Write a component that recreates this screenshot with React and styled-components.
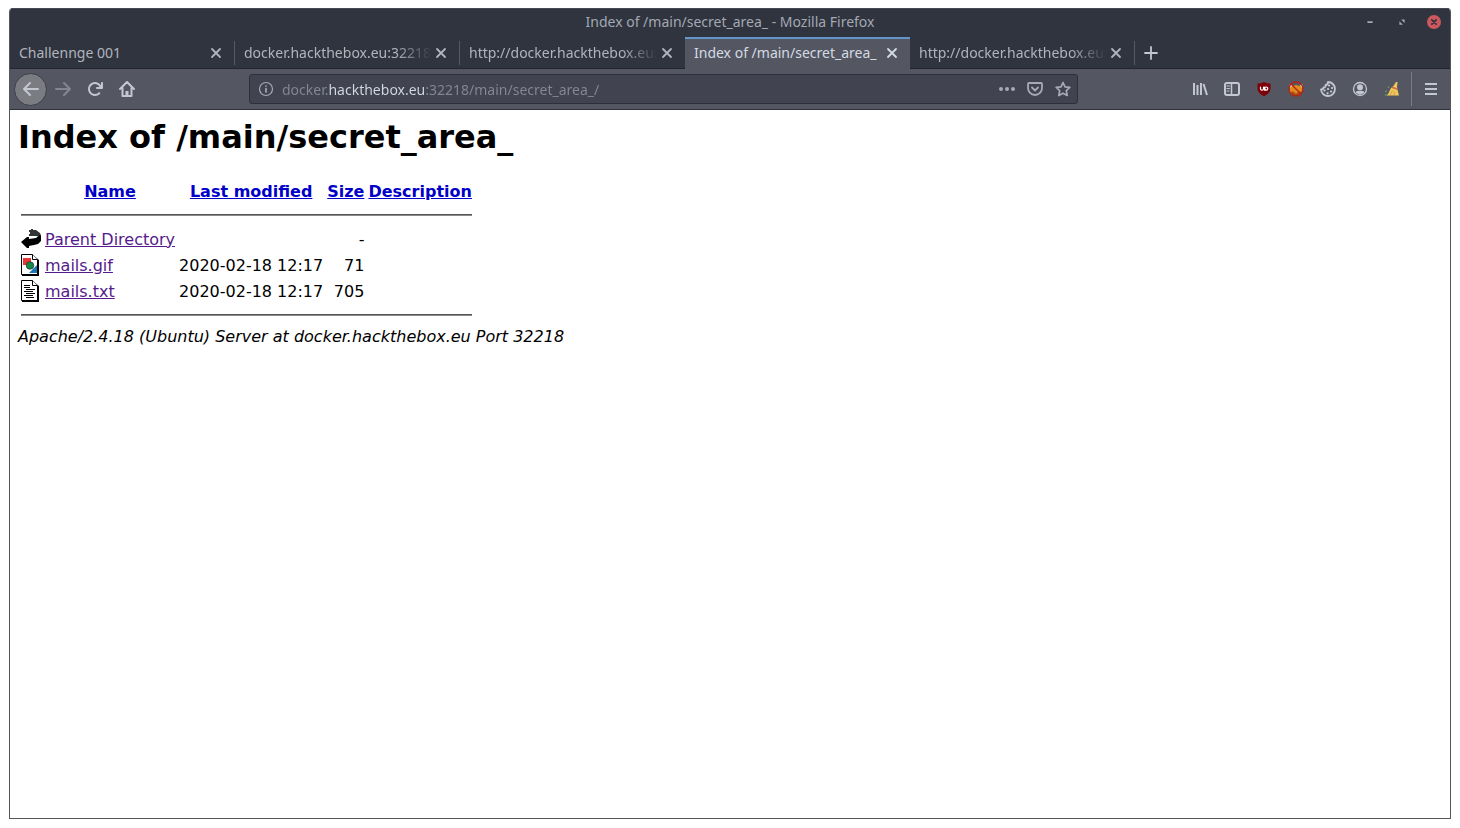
import React from "react";
import styled, { createGlobalStyle } from "styled-components";

const GlobalStyle = createGlobalStyle`
  * {
    box-sizing: border-box;
  }
  body {
    margin: 0;
    background: #ffffff;
  }
`;

const Window = styled.div`
  display: flex;
  flex-direction: column;
  min-height: calc(100vh - 17px);
  margin: 8px 9px 9px;
  border: 1px solid #55555a;
  border-top: 0;
  border-radius: 4px 4px 0 0;
  overflow: hidden;
  font-family: "Noto Sans", sans-serif;
  font-size: 14px;
  color: #b3b7c0;
`;
const TitleBar = styled.header`
  display: grid;
  grid-template-columns: 1fr auto 1fr;
  align-items: center;
  height: 29px;
  padding: 0 9px 2px;
  background: #2f343f;
  box-shadow: inset 0 1px #444955;
`;
const Title = styled.span`
  grid-column: 2;
  color: #a4a8b2;
`;
const WindowButtons = styled.div`
  display: flex;
  gap: 18px;
  justify-content: flex-end;
`;
const PlainButton = styled.button`
  display: flex;
  flex: none;
  align-items: center;
  justify-content: center;
  width: ${({ $size }) => $size || 32}px;
  height: ${({ $size }) => $size || 32}px;
  padding: 0;
  border: 0;
  background: none;
  color: ${({ $color }) => $color || "#c3c7d1"};
`;
const Tabs = styled.nav`
  display: flex;
  height: 32px;
  background: #2f343f;
  box-shadow: inset 0 -1px #22252e;
`;
const Tab = styled.div`
  display: flex;
  flex: 0 1 ${({ $divided }) => ($divided ? 224 : 225)}px;
  align-items: center;
  min-width: 0;
  padding: 0 9px 3px;
  border-top: 2px solid ${({ $active }) => ($active ? "#6295cc" : "transparent")};
  background: ${({ $active }) => ($active ? "#545762" : "none")};
  color: ${({ $active }) => ($active ? "#d3dae3" : "#b0b4bd")};
`;
const TabLabel = styled.span`
  flex: 1;
  min-width: 0;
  overflow: hidden;
  white-space: nowrap;
  mask-image: ${({ $fade }) =>
    $fade ? "linear-gradient(to left, transparent, #000 36px)" : "none"};
`;
const Divider = styled.span`
  flex: none;
  width: 1px;
  height: ${({ $h }) => $h}px;
  margin: 0 ${({ $gap }) => $gap || 0}px;
  align-self: center;
  background: ${({ $color }) => $color || "#555a65"};
`;
const Toolbar = styled.div`
  display: flex;
  align-items: center;
  height: 41px;
  padding: 0 3px 0 4px;
  border-bottom: 1px solid #2e313b;
  background: #545762;
`;
const BackButton = styled(PlainButton)`
  border: 1px solid #3c3e48;
  border-radius: 50%;
  background: #7b7c81;
`;
const UrlBar = styled.div`
  display: flex;
  flex: 1;
  align-items: center;
  min-width: 0;
  height: 30px;
  margin: 0 106px;
  padding-left: 8px;
  gap: 8px;
  border: 1px solid #2d303b;
  border-radius: 3px;
  background: #414350;
  color: #a7aab5;
`;
/* the host part of the address is brighter than the rest */
const UrlInput = styled.input`
  flex: 1;
  min-width: 0;
  height: 28px;
  padding: 0;
  border: 0;
  outline: 0;
  font: inherit;
  color: transparent;
  background: linear-gradient(
    to right,
    #858894 47px,
    #d3dae3 47px 143px,
    #858894 143px
  );
  background-clip: text;
`;
const UrlActions = styled.div`
  display: flex;
`;
const Page = styled.main`
  flex: 1;
  padding: 8px;
  background: #ffffff;
  color: #000000;
  font-family: "DejaVu Sans", sans-serif;
  font-size: 16px;
  line-height: 19px;
`;
const Heading = styled.h1`
  margin: 0 0 20px;
  font-size: 32px;
  line-height: 39px;
`;
const Listing = styled.table`
  border-spacing: 2px;
  td,
  th {
    padding: 1px;
  }
  td:nth-child(3),
  td:nth-child(4) {
    text-align: right;
    white-space: nowrap;
  }
`;
const Link = styled.a`
  color: ${({ $visited }) => ($visited ? "#551a8b" : "#0000c8")};
`;
const FileIcon = styled.svg`
  display: block;
  width: 20px;
  height: 22px;
`;
const Rule = styled.hr`
  height: 2px;
  margin: 8px 0;
  border: 0;
  border-top: 1px solid #555555;
  border-bottom: 1px solid #8a8a8a;
`;
const Address = styled.address`
  font-style: italic;
`;

const Icon = ({ size = 16, children }) => (
  <svg
    width={size}
    height={size}
    viewBox="0 0 16 16"
    fill="none"
    stroke="currentColor"
    strokeWidth="2"
    strokeLinecap="round"
    strokeLinejoin="round"
    aria-hidden="true"
  >
    {children}
  </svg>
);

const tools = [
  {
    label: "Library",
    icon: (
      <path d="M2 2v12M5.5 4v10M9 2v12M11.5 3l3.5 11" strokeLinecap="butt" />
    ),
  },
  {
    label: "Sidebars",
    icon: (
      <>
        <rect x="1" y="2" width="14" height="12" rx="2" />
        <path d="M7.5 2v12" strokeWidth="1.5" />
        <path d="M3 5h2.5M3 7.5h2.5M3 10h2" strokeWidth="1" />
      </>
    ),
  },
  {
    label: "uBlock Origin",
    icon: (
      <>
        <path
          d="M8 1c2.5 1.5 4.5 1.5 6.500 1.500V7c0 4-3 6.500-6.500 8.300C4.500 13.500 1.500 11 1.500 7V2.500C3.500 2.500 5.500 2.500 8 1z"
          fill="#7d0008"
          stroke="none"
        />
        <path d="M4.500 6v1.700a1.500 1.500 0 0 0 3 0V6M8.700 6v3.200" stroke="#fff" strokeWidth="1.200" />
        <circle cx="10.200" cy="7.600" r="1.600" stroke="#fff" strokeWidth="1.200" />
      </>
    ),
  },
  {
    label: "FoxyProxy",
    icon: (
      <>
        <path d="M2 4l3 1 3-1 4 1 2-2 .5 6-3 5H5L2 11z" fill="#e08a20" stroke="none" />
        <path d="M1.500 3.500l3 .500-2 3zM14.500 3l-2.500 1 2 3z" fill="#f3d9b0" stroke="none" />
        <path d="M3 11c2-1 3 0 5 2 2-2 3-3 5-2l-2 3H5z" fill="#a8480f" stroke="none" />
        <circle cx="8" cy="8" r="7" stroke="#b52218" strokeWidth="1.300" />
        <path d="M3 3l10 10" stroke="#b52218" strokeWidth="1.300" />
      </>
    ),
  },
  {
    label: "Cookies",
    icon: (
      <>
        <path
          d="M8 1a7 7 0 1 1-7 7.500c1.500 0 2.500-.500 2.500-2C5 6.500 6 5.500 5.500 4 7 4 8 2.500 8 1z"
          strokeWidth="1.800"
        />
        <path d="M9 4.500h.1M12 7h.1M8 8h.1M4.500 9.500h.1M11 10.500h.1M7.500 12.300h.1" strokeWidth="2.200" />
      </>
    ),
  },
  {
    label: "Account",
    icon: (
      <>
        <circle cx="8" cy="8" r="6.500" strokeWidth="1.300" />
        <circle cx="8" cy="6.300" r="3" fill="currentColor" stroke="none" />
        <path
          d="M3.500 11.300c1-1.500 2.500-1.500 4.500-1.500s3.500 0 4.500 1.500c-2.500 2.800-6.500 2.800-9 0z"
          fill="currentColor"
          stroke="none"
        />
      </>
    ),
  },
  {
    label: "Clear data",
    icon: (
      <>
        <path d="M13.500 1l-.500 6 2 7.500H2.500C6 12 5 8 9 5.500L12 1z" fill="#eec65c" stroke="none" />
        <path d="M8.500 6.500l4.500 1.500" stroke="#d0684a" strokeWidth="1.500" />
        <path d="M6 14l2.500-4M10 14l.5-3" stroke="#c79a3a" strokeWidth=".8" />
        <path d="M2 10v.5M4.500 6v.5M1.500 14h.5" stroke="#5f9b5c" strokeWidth="1.500" />
      </>
    ),
  },
];

const tabs = [
  { title: "Challennge 001", divided: true },
  { title: "docker.hackthebox.eu:32218", fade: true, divided: true },
  { title: "http://docker.hackthebox.eu:", fade: true },
  { title: "Index of /main/secret_area_", active: true },
  { title: "http://docker.hackthebox.eu:", fade: true, divided: true },
];

const BackGlyph = () => (
  <FileIcon viewBox="0 0 20 22" aria-hidden="true">
    <path d="M8 2h2V1h2v1h3l4 3v4l-4-1H8V6h1V4H8z" fill="#333" />
    <path d="M19 5l1 3v5l-3 3-4 1-5 1v2H6l-6-6 6-5h2v2l7-1 4-3z" fill="#000" />
  </FileIcon>
);

const PageGlyph = ({ children }) => (
  <FileIcon viewBox="0 0 20 22" aria-hidden="true">
    <path d="M1 1h11l6 5v16H1z" fill="#000" />
    <path d="M.5.5h11l5 5v15H.5z" fill="#fff" stroke="#000" />
    <path d="M11.5.5v5h5" fill="#fff" stroke="#000" />
    {children}
  </FileIcon>
);

const files = [
  { name: "Parent Directory", date: "", size: "-", icon: <BackGlyph /> },
  {
    name: "mails.gif",
    date: "2020-02-18 12:17",
    size: "71",
    icon: (
      <PageGlyph>
        <path d="M2 4h8v7H2z" fill="#e53935" />
        <path d="M16 11v8H8z" fill="#1976b8" />
        <circle cx="9" cy="11.5" r="3.8" fill="#158a4a" stroke="#222" strokeWidth=".6" />
      </PageGlyph>
    ),
  },
  {
    name: "mails.txt",
    date: "2020-02-18 12:17",
    size: "705",
    icon: (
      <PageGlyph>
        <path
          d="M3 5.5h6M3 7.5h6M5 9.5h9M3 11.5h9M5 13.5h9M3 15.5h9M5 17.5h8"
          stroke="#000"
        />
      </PageGlyph>
    ),
  },
];

const columns = ["Name", "Last modified", "Size", "Description"];

const App = () => {
  return (
    <>
      <GlobalStyle />
      <Window>
        <TitleBar>
          <Title>Index of /main/secret_area_ - Mozilla Firefox</Title>
          <WindowButtons>
            <PlainButton $size={14} $color="#a4a8b2" aria-label="Minimize">
              <Icon size={14}>
                <path d="M5 8h6" strokeLinecap="butt" />
              </Icon>
            </PlainButton>
            <PlainButton $size={14} $color="#a4a8b2" aria-label="Restore">
              <Icon size={14}>
                <path d="M7 5h4v4zM5 7v4h4z" fill="currentColor" stroke="none" />
              </Icon>
            </PlainButton>
            <PlainButton $size={14} aria-label="Close window">
              <Icon size={14}>
                <circle cx="8" cy="8" r="8" fill="#cc575d" stroke="none" />
                <path d="M5.5 5.5l5 5M10.5 5.5l-5 5" stroke="#2f343f" />
              </Icon>
            </PlainButton>
          </WindowButtons>
        </TitleBar>
        <Tabs>
          {tabs.map((tab, i) => (
            <React.Fragment key={i}>
              <Tab $active={tab.active} $divided={tab.divided}>
                <TabLabel $fade={tab.fade}>{tab.title}</TabLabel>
                <PlainButton $size={18} $color="inherit" aria-label="Close tab">
                  <Icon>
                    <path d="M4 4l8 8M12 4l-8 8" strokeWidth="1.8" />
                  </Icon>
                </PlainButton>
              </Tab>
              {tab.divided && <Divider $h={24} />}
            </React.Fragment>
          ))}
          <PlainButton $size={31} aria-label="New tab">
            <Icon>
              <path d="M8 2v12M2 8h12" strokeWidth="1.8" />
            </Icon>
          </PlainButton>
        </Tabs>
        <Toolbar>
          <BackButton $size={33} aria-label="Back">
            <Icon>
              <path d="M15 8H1.5M7 2L1 8l6 6" />
            </Icon>
          </BackButton>
          <PlainButton $color="#83868f" aria-label="Forward">
            <Icon>
              <path d="M1 8h13.5M9 2l6 6-6 6" />
            </Icon>
          </PlainButton>
          <PlainButton aria-label="Reload">
            <Icon>
              <path
                d="M15 1a1 1 0 0 0-1 1v2.418A6.995 6.995 0 1 0 8 15a6.954 6.954 0 0 0 4.95-2.05 1 1 0 0 0-1.414-1.414A5.019 5.019 0 1 1 12.549 6H10a1 1 0 0 0 0 2h5a1 1 0 0 0 1-1V2a1 1 0 0 0-1-1z"
                fill="currentColor"
                stroke="none"
              />
            </Icon>
          </PlainButton>
          <PlainButton aria-label="Home">
            <Icon>
              <path d="M1 8l7-7 7 7M3.500 7v8h9V7" />
              <path d="M8 15v-5" strokeWidth="3" strokeLinecap="butt" />
            </Icon>
          </PlainButton>
          <UrlBar>
            <Icon>
              <circle cx="8" cy="8" r="6.5" strokeWidth="1.2" />
              <path d="M8 7.500v3.500M8 5h.01" strokeWidth="1.700" />
            </Icon>
            <UrlInput
              aria-label="Address"
              defaultValue="docker.hackthebox.eu:32218/main/secret_area_/"
            />
            <UrlActions>
              <PlainButton $size={28} $color="inherit" aria-label="Page actions">
                <Icon>
                  <path d="M2 8h.01M8 8h.01M14 8h.01" strokeWidth="4" />
                </Icon>
              </PlainButton>
              <PlainButton $size={28} $color="inherit" aria-label="Pocket">
                <Icon>
                  <path
                    d="M2 2h12a1 1 0 0 1 1 1v4a7 7 0 0 1-14 0V3a1 1 0 0 1 1-1z"
                    strokeWidth="1.8"
                  />
                  <path d="M5 6.500l3 3 3-3" strokeWidth="1.8" />
                </Icon>
              </PlainButton>
              <PlainButton $size={28} $color="inherit" aria-label="Bookmark">
                <Icon>
                  <path
                    d="M8 1.500l2 4.300 4.800.6-3.500 3.300.9 4.800L8 12.200l-4.200 2.300.9-4.800L1.200 6.400 6 5.800z"
                    strokeWidth="1.7"
                  />
                </Icon>
              </PlainButton>
            </UrlActions>
          </UrlBar>
          {tools.map((tool) => (
            <PlainButton key={tool.label} aria-label={tool.label}>
              <Icon>{tool.icon}</Icon>
            </PlainButton>
          ))}
          <Divider $h={34} $gap={3} $color="#777b86" />
          <PlainButton aria-label="Menu">
            <Icon>
              <path d="M2 3h12M2 8h12M2 13h12" strokeLinecap="butt" />
            </Icon>
          </PlainButton>
        </Toolbar>
        <Page>
          <Heading>Index of /main/secret_area_</Heading>
          <Listing>
            <thead>
              <tr>
                <th>
                  <FileIcon aria-hidden="true" />
                </th>
                {columns.map((column) => (
                  <th key={column}>
                    <Link href="#sort">{column}</Link>
                  </th>
                ))}
              </tr>
              <tr>
                <th colSpan={5}>
                  <Rule />
                </th>
              </tr>
            </thead>
            <tbody>
              {files.map((file) => (
                <tr key={file.name}>
                  <td>{file.icon}</td>
                  <td>
                    <Link $visited href="#file">
                      {file.name}
                    </Link>
                  </td>
                  <td>{file.date}</td>
                  <td>{file.size}</td>
                  <td />
                </tr>
              ))}
            </tbody>
            <tfoot>
              <tr>
                <th colSpan={5}>
                  <Rule />
                </th>
              </tr>
            </tfoot>
          </Listing>
          <Address>
            Apache/2.4.18 (Ubuntu) Server at docker.hackthebox.eu Port 32218
          </Address>
        </Page>
      </Window>
    </>
  );
};

export default App;
